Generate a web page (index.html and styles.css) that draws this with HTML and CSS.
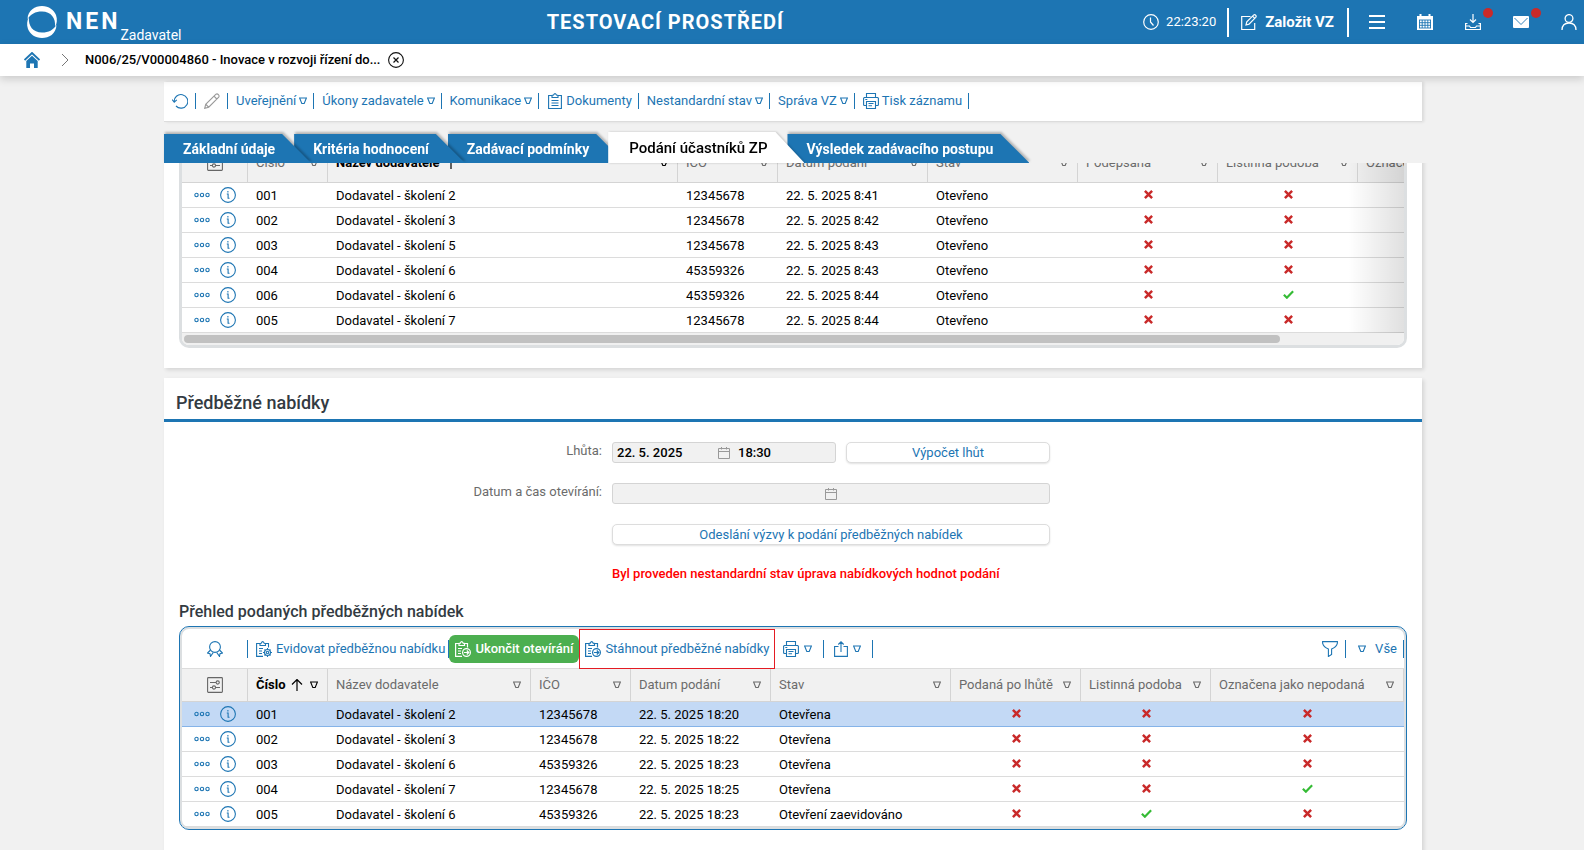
FILE: index.html
```html
<!DOCTYPE html>
<html lang="cs">
<head>
<meta charset="utf-8">
<title>NEN – Zadavatel</title>
<link rel="stylesheet" href="styles.css">
</head>
<body>
<svg class="sprite" aria-hidden="true">
  <symbol id="tri" viewBox="0 0 8 8"><path d="M.6 1h6.8L5.200 6.500H2.800z" fill="none" stroke="currentColor" stroke-width="1.1"/></symbol>
  <symbol id="dots" viewBox="0 0 16 6"><g fill="none" stroke="currentColor" stroke-width="1.1"><circle cx="2.5" cy="3" r="1.7"/><circle cx="8" cy="3" r="1.7"/><circle cx="13.5" cy="3" r="1.7"/></g></symbol>
  <symbol id="info" viewBox="0 0 16 16"><circle cx="8" cy="8" r="7.4" fill="none" stroke="currentColor" stroke-width="1.1"/><path d="M6.800 7h1.300v4.200h1.400M7.900 4v1.400" fill="none" stroke="currentColor" stroke-width="1.1"/></symbol>
  <symbol id="cross" viewBox="0 0 8 8"><path d="M.8.8l6.4 6.4M7.2.8L.8 7.2" stroke="currentColor" stroke-width="2.2"/></symbol>
  <symbol id="check" viewBox="0 0 10 8"><path d="M.8 4.2l2.7 2.7L9.2 1" fill="none" stroke="currentColor" stroke-width="2"/></symbol>
  <symbol id="settings" viewBox="0 0 16 16"><g fill="none" stroke="currentColor" stroke-width="1.1"><rect x=".6" y=".6" width="14.8" height="14.8" rx=".8"/><circle cx="10.7" cy="5.5" r="1.6"/><circle cx="7" cy="10.5" r="1.6"/><path d="M3 5.500h6M3 10.500h2.400M8.600 10.500H13"/></g></symbol>
  <symbol id="print" viewBox="0 0 16 16"><g fill="none" stroke="currentColor" stroke-width="1.1"><path d="M3.500 4.500v-4h9v4M3.500 12.500H1.200L.6 12V5.200l.7-.7h13.400l.7.700V12l-.6.500H12.500"/><path d="M3.500 8.500h9v7h-9zM5.500 10.500h5M5.500 12.800h3.500M2.300 6.500h2"/></g></symbol>
  <symbol id="clip" viewBox="0 0 14 16"><g fill="none" stroke="currentColor" stroke-width="1.100"><path d="M4 2.500H.6v13h12.800v-13H10"/><path d="M4 4.500v-2l1.500-.4Q7-.9 8.500 2.100l1.500.4v2zM3.500 7.500h7M3.500 10h7M3.500 12.500h7"/></g></symbol>
  <symbol id="clipgear" viewBox="0 0 16 16"><g fill="none" stroke="currentColor" stroke-width="1.100"><path d="M4 2.500H.6v12.900H7M9.500 2.500h3V6.500"/><path d="M4 4.500v-2l1.200-.3Q6.700-.9 8.200 2.200l1.300.3v2zM3 7.500h4M3 10h3M3 12.500h3"/><circle cx="11.500" cy="11.500" r="3"/><circle cx="11.500" cy="11.500" r="1.200"/><path d="M11.500 7v1.500M11.500 14.500V16M7 11.500h1.500M14.500 11.500H16M8.500 8.500l1 1M13.500 13.500l1 1M14.500 8.500l-1 1M9.500 13.500l-1 1"/></g></symbol>
  <symbol id="cliparrow" viewBox="0 0 16 16"><g fill="none" stroke="currentColor" stroke-width="1.200"><path d="M4 2.500H.6v12.900H7M9.500 2.500h3V6.500"/><path d="M4 4.500v-2l1.200-.3Q6.700-.9 8.200 2.200l1.300.3v2zM3 7.500h4M3 10h3M3 12.500h3"/><circle cx="11.500" cy="11.500" r="3.900"/><path d="M9 11.500h4.500M11.800 9.500l2 2-2 2"/></g></symbol>
  <symbol id="cal" viewBox="0 0 12 12"><path d="M.5 1.500h11v10H.5zM.5 4.500h11M3.500 0v2.500M8.500 0v2.500" fill="none" stroke="currentColor"/></symbol>
</svg>

<header class="topbar">
  <a class="brand" href="#">
    <svg class="brand-ring" viewBox="0 0 32 32"><path d="M1.500 13C2 4 9 0 16 0c7 0 12 4 14 9 1.500 4 1 9-1 12 1-9-4-15.500-13-15.500C9 5.500 5 8 1.500 13z" fill="#fff"/><path d="M30.500 19C30 28 23 32 16 32 9 32 4 28 2 23 .5 19 1 14 3 11c-1 9 4 15.500 13 15.500 7 0 11-2.500 14.500-7.500z" fill="#fff"/></svg>
    <span class="brand-name">NEN</span><span class="brand-role">Zadavatel</span>
  </a>
  <div class="env">TESTOVACÍ PROSTŘEDÍ</div>
  <div class="clock">
    <svg class="i16" viewBox="0 0 16 16"><circle cx="8" cy="8" r="7.300" fill="none" stroke="#fff" stroke-width="1.200"/><path d="M7.500 3.500V8l3 3.500" fill="none" stroke="#fff" stroke-width="1.200"/></svg>
    <time>22:23:20</time>
  </div>
  <button class="create" type="button">
    <svg class="i16" viewBox="0 0 16 16"><path d="M9.500 2.500H.7v13h13V9M5 11l.8-3.300L12.800.9q1-.6 2 .4.800 1-.1 2L8 10.200zM11.500 2.200l2 2" fill="none" stroke="#fff" stroke-width="1.200"/></svg>
    Založit VZ
  </button>
  <nav class="top-icons" aria-label="Uživatel">
    <button type="button" aria-label="Menu"><svg class="i16" viewBox="0 0 16 16"><path d="M0 2h16M0 8h16M0 14h16" stroke="#fff" stroke-width="2"/></svg></button>
    <button type="button" aria-label="Kalendář"><svg class="i16" viewBox="0 0 16 16"><path d="M0 2h2.500V0h2v2h7V0h2v2H16v14H0z" fill="#fff"/><path d="M2 6h12M2 8.700h12M2 11.300h12M2 14h12M2.500 6v8M5.200 6v8M8 6v8M10.800 6v8M13.500 6v8" stroke="#1d75b3" stroke-width=".9"/></svg></button>
    <button type="button" aria-label="Stažené soubory"><svg class="i16" viewBox="0 0 16 16"><path d="M8 0v8.500M5 5.500l3 3 3-3M2.500 9.500H.6v6h14.800v-6h-1.900M.6 12h3.900l1 1.500h5l1-1.500h3.900" fill="none" stroke="#fff" stroke-width="1.200"/></svg><i class="dot"></i></button>
    <button type="button" aria-label="Zprávy"><svg class="i16" viewBox="0 0 16 16"><rect y="2" width="16" height="12" rx="1" fill="#fff"/><path d="M1.500 4l6.500 6.500L14.500 4" fill="none" stroke="#1d75b3" stroke-width=".9"/></svg><i class="dot"></i></button>
    <button type="button" aria-label="Profil"><svg class="i16" viewBox="0 0 16 16"><g fill="none" stroke="#fff" stroke-width="1.300"><circle cx="8" cy="4.500" r="3.900"/><path d="M1 16q.2-7 7-7t7 7"/></g></svg></button>
  </nav>
</header>

<nav class="crumbs" aria-label="Drobečková navigace">
  <a class="home" href="#" aria-label="Domů"><svg class="i16" viewBox="0 0 16 16"><path d="M.5 8L8 1l7.500 7" fill="none" stroke="currentColor" stroke-width="1.900"/><path d="M2.300 9L8 3.800 13.700 9v7H10v-4.500H6V16H2.300z" fill="currentColor"/></svg></a>
  <svg class="chev" viewBox="0 0 8 14"><path d="M1 1l6 6-6 6" fill="none" stroke="#777"/></svg>
  <a class="record" href="#">N006/25/V00004860 - Inovace v rozvoji řízení do...</a>
  <button class="close" type="button" aria-label="Zavřít"><svg class="i16" viewBox="0 0 16 16"><circle cx="8" cy="8" r="7.400" fill="none" stroke="#111" stroke-width="1.100"/><path d="M5.500 5.500l5 5M10.500 5.500l-5 5" stroke="#111" stroke-width="1.200"/></svg></button>
</nav>

<main class="page">
  <div class="sticky">
    <div class="tools">
      <button class="tool icon" type="button" aria-label="Obnovit"><svg class="i16" viewBox="0 0 16 16"><path d="M2.200 9A6.800 6.800 0 1 1 4 13M0 6.500l2.200 2.700 2.600-2.400" fill="none" stroke="currentColor" stroke-width="1.100"/></svg></button>
      <button class="tool icon off" type="button" aria-label="Upravit"><svg class="i16" viewBox="0 0 16 16"><path d="M.7 15.300l1-4L12 1.200q1.200-.9 2.400.4t.3 2.500L4.700 14.200zM10 3.200L12.800 6M2 11.500l2.600 2.600" fill="none" stroke="currentColor" stroke-width="1.100"/></svg></button>
      <button class="tool" type="button">Uveřejnění<svg class="tri"><use href="#tri"/></svg></button>
      <button class="tool" type="button">Úkony zadavatele<svg class="tri"><use href="#tri"/></svg></button>
      <button class="tool" type="button">Komunikace<svg class="tri"><use href="#tri"/></svg></button>
      <button class="tool" type="button"><svg class="i16"><use href="#clip"/></svg>Dokumenty</button>
      <button class="tool" type="button">Nestandardní stav<svg class="tri"><use href="#tri"/></svg></button>
      <button class="tool" type="button">Správa VZ<svg class="tri"><use href="#tri"/></svg></button>
      <button class="tool" type="button"><svg class="i16"><use href="#print"/></svg>Tisk záznamu</button>
    </div>
    <div class="tabs" role="tablist">
      <button class="tab" role="tab" type="button"><span>Základní údaje</span></button>
      <button class="tab" role="tab" type="button"><span>Kritéria hodnocení</span></button>
      <button class="tab" role="tab" type="button"><span>Zadávací podmínky</span></button>
      <button class="tab active" role="tab" type="button" aria-selected="true"><span>Podání účastníků ZP</span></button>
      <button class="tab" role="tab" type="button"><span>Výsledek zadávacího postupu</span></button>
    </div>
  </div>

  <section class="card first">
    <div class="grid">
      <div class="scroller">
      <table class="t-bids">
        <colgroup><col class="w66"><col class="w80"><col class="w350"><col class="w100"><col class="w150"><col class="w150"><col class="w140"><col class="w140"><col></colgroup>
        <thead><tr>
          <th><svg class="set"><use href="#settings"/></svg></th>
          <th><div>Číslo<svg class="tri"><use href="#tri"/></svg></div></th>
          <th class="sorted"><div>Název dodavatele<svg class="arrow" viewBox="0 0 12 12"><path d="M6 12V.8M1 5.500l5-5 5 5" fill="none" stroke="#000" stroke-width="1.200"/></svg><svg class="tri"><use href="#tri"/></svg></div></th>
          <th><div>IČO<svg class="tri"><use href="#tri"/></svg></div></th>
          <th><div>Datum podání<svg class="tri"><use href="#tri"/></svg></div></th>
          <th><div>Stav<svg class="tri"><use href="#tri"/></svg></div></th>
          <th><div>Podepsána<svg class="tri"><use href="#tri"/></svg></div></th>
          <th><div>Listinná podoba<svg class="tri"><use href="#tri"/></svg></div></th>
          <th class="last"><div>Označena</div></th>
        </tr></thead>
        <tbody>
          <tr><td class="act"><svg class="dots"><use href="#dots"/></svg><svg class="i16"><use href="#info"/></svg></td><td>001</td><td>Dodavatel - školení 2</td><td>12345678</td><td>22. 5. 2025 8:41</td><td>Otevřeno</td><td class="m"><svg class="no"><use href="#cross"/></svg></td><td class="m"><svg class="no"><use href="#cross"/></svg></td><td></td></tr>
          <tr><td class="act"><svg class="dots"><use href="#dots"/></svg><svg class="i16"><use href="#info"/></svg></td><td>002</td><td>Dodavatel - školení 3</td><td>12345678</td><td>22. 5. 2025 8:42</td><td>Otevřeno</td><td class="m"><svg class="no"><use href="#cross"/></svg></td><td class="m"><svg class="no"><use href="#cross"/></svg></td><td></td></tr>
          <tr><td class="act"><svg class="dots"><use href="#dots"/></svg><svg class="i16"><use href="#info"/></svg></td><td>003</td><td>Dodavatel - školení 5</td><td>12345678</td><td>22. 5. 2025 8:43</td><td>Otevřeno</td><td class="m"><svg class="no"><use href="#cross"/></svg></td><td class="m"><svg class="no"><use href="#cross"/></svg></td><td></td></tr>
          <tr><td class="act"><svg class="dots"><use href="#dots"/></svg><svg class="i16"><use href="#info"/></svg></td><td>004</td><td>Dodavatel - školení 6</td><td>45359326</td><td>22. 5. 2025 8:43</td><td>Otevřeno</td><td class="m"><svg class="no"><use href="#cross"/></svg></td><td class="m"><svg class="no"><use href="#cross"/></svg></td><td></td></tr>
          <tr><td class="act"><svg class="dots"><use href="#dots"/></svg><svg class="i16"><use href="#info"/></svg></td><td>006</td><td>Dodavatel - školení 6</td><td>45359326</td><td>22. 5. 2025 8:44</td><td>Otevřeno</td><td class="m"><svg class="no"><use href="#cross"/></svg></td><td class="m"><svg class="yes"><use href="#check"/></svg></td><td></td></tr>
          <tr><td class="act"><svg class="dots"><use href="#dots"/></svg><svg class="i16"><use href="#info"/></svg></td><td>005</td><td>Dodavatel - školení 7</td><td>12345678</td><td>22. 5. 2025 8:44</td><td>Otevřeno</td><td class="m"><svg class="no"><use href="#cross"/></svg></td><td class="m"><svg class="no"><use href="#cross"/></svg></td><td></td></tr>
        </tbody>
      </table>
      </div>
      <div class="track"><div class="thumb"></div></div>
    </div>
  </section>

  <section class="card second">
    <h2>Předběžné nabídky</h2>
    <form class="form">
      <label for="deadline">Lhůta:</label>
      <div class="field date-time">
        <input id="deadline" class="date" value="22. 5. 2025" readonly>
        <svg class="cal"><use href="#cal"/></svg>
        <input class="time" aria-label="Čas lhůty" value="18:30" readonly>
      </div>
      <button class="btn" type="button">Výpočet lhůt</button>
      <label for="opening">Datum a čas otevírání:</label>
      <div class="field wide">
        <input id="opening" readonly>
        <svg class="cal"><use href="#cal"/></svg>
        <input aria-label="Čas otevírání" readonly>
      </div>
      <button class="btn wide" type="button">Odeslání výzvy k podání předběžných nabídek</button>
      <p class="warn">Byl proveden nestandardní stav úprava nabídkových hodnot podání</p>
    </form>
    <h3>Přehled podaných předběžných nabídek</h3>
    <div class="grid focus">
      <div class="gridbar">
        <button class="gtool award" type="button" aria-label="Hodnocení"><svg class="i16" viewBox="0 0 16 16"><g fill="none" stroke="currentColor" stroke-width="1.100"><circle cx="8" cy="6" r="5.400"/><path d="M3.500 9L.6 12l2.400.6.500 2.800L6.300 11.500M12.500 9l2.900 3-2.400.6-.5 2.800L9.700 11.500"/></g></svg></button>
        <button class="gtool add" type="button"><svg class="i16"><use href="#clipgear"/></svg>Evidovat předběžnou nabídku</button>
        <button class="gtool green" type="button"><svg class="i16"><use href="#cliparrow"/></svg>Ukončit otevírání</button>
        <button class="gtool marked" type="button"><svg class="i16"><use href="#cliparrow"/></svg>Stáhnout předběžné nabídky</button>
        <button class="gtool print" type="button" aria-label="Tisk"><svg class="i16"><use href="#print"/></svg><svg class="tri"><use href="#tri"/></svg></button>
        <button class="gtool export" type="button" aria-label="Export"><svg class="share" viewBox="0 0 14 16"><path d="M4.500 5.500H.6v9.900h12.800V5.500H9.500M7 11V.8M4.300 3.500L7 .8l2.700 2.700" fill="none" stroke="currentColor" stroke-width="1.100"/></svg><svg class="tri"><use href="#tri"/></svg></button>
        <button class="gtool filter" type="button" aria-label="Filtr"><svg class="i16" viewBox="0 0 16 16"><path d="M.6.600h14.800v1.500Q14.500 6 9.600 8v5.500l-3.200 2V8Q1.500 6 .6 2.100z" fill="none" stroke="currentColor" stroke-width="1.100"/></svg></button>
        <button class="gtool all" type="button"><svg class="tri"><use href="#tri"/></svg>Vše</button>
      </div>
      <table class="t-pre">
        <colgroup><col class="w66"><col class="w80"><col class="w203"><col class="w100"><col class="w140"><col class="w180"><col class="w130"><col class="w130"><col></colgroup>
        <thead><tr>
          <th><svg class="set"><use href="#settings"/></svg></th>
          <th class="sorted"><div>Číslo<svg class="arrow" viewBox="0 0 12 12"><path d="M6 12V.8M1 5.500l5-5 5 5" fill="none" stroke="#000" stroke-width="1.200"/></svg><svg class="tri"><use href="#tri"/></svg></div></th>
          <th><div>Název dodavatele<svg class="tri"><use href="#tri"/></svg></div></th>
          <th><div>IČO<svg class="tri"><use href="#tri"/></svg></div></th>
          <th><div>Datum podání<svg class="tri"><use href="#tri"/></svg></div></th>
          <th><div>Stav<svg class="tri"><use href="#tri"/></svg></div></th>
          <th><div>Podaná po lhůtě<svg class="tri"><use href="#tri"/></svg></div></th>
          <th><div>Listinná podoba<svg class="tri"><use href="#tri"/></svg></div></th>
          <th><div>Označena jako nepodaná<svg class="tri"><use href="#tri"/></svg></div></th>
        </tr></thead>
        <tbody>
          <tr class="selected"><td class="act"><svg class="dots"><use href="#dots"/></svg><svg class="i16"><use href="#info"/></svg></td><td>001</td><td>Dodavatel - školení 2</td><td>12345678</td><td>22. 5. 2025 18:20</td><td>Otevřena</td><td class="m"><svg class="no"><use href="#cross"/></svg></td><td class="m"><svg class="no"><use href="#cross"/></svg></td><td class="m"><svg class="no"><use href="#cross"/></svg></td></tr>
          <tr><td class="act"><svg class="dots"><use href="#dots"/></svg><svg class="i16"><use href="#info"/></svg></td><td>002</td><td>Dodavatel - školení 3</td><td>12345678</td><td>22. 5. 2025 18:22</td><td>Otevřena</td><td class="m"><svg class="no"><use href="#cross"/></svg></td><td class="m"><svg class="no"><use href="#cross"/></svg></td><td class="m"><svg class="no"><use href="#cross"/></svg></td></tr>
          <tr><td class="act"><svg class="dots"><use href="#dots"/></svg><svg class="i16"><use href="#info"/></svg></td><td>003</td><td>Dodavatel - školení 6</td><td>45359326</td><td>22. 5. 2025 18:23</td><td>Otevřena</td><td class="m"><svg class="no"><use href="#cross"/></svg></td><td class="m"><svg class="no"><use href="#cross"/></svg></td><td class="m"><svg class="no"><use href="#cross"/></svg></td></tr>
          <tr><td class="act"><svg class="dots"><use href="#dots"/></svg><svg class="i16"><use href="#info"/></svg></td><td>004</td><td>Dodavatel - školení 7</td><td>12345678</td><td>22. 5. 2025 18:25</td><td>Otevřena</td><td class="m"><svg class="no"><use href="#cross"/></svg></td><td class="m"><svg class="no"><use href="#cross"/></svg></td><td class="m"><svg class="yes"><use href="#check"/></svg></td></tr>
          <tr><td class="act"><svg class="dots"><use href="#dots"/></svg><svg class="i16"><use href="#info"/></svg></td><td>005</td><td>Dodavatel - školení 6</td><td>45359326</td><td>22. 5. 2025 18:23</td><td>Otevření zaevidováno</td><td class="m"><svg class="no"><use href="#cross"/></svg></td><td class="m"><svg class="yes"><use href="#check"/></svg></td><td class="m"><svg class="no"><use href="#cross"/></svg></td></tr>
        </tbody>
      </table>
    </div>
  </section>
</main>
</body>
</html>
```

FILE: styles.css
```css
:root {
  --blue: #1d75b3;
  --line: #dcdcdc;
  --grey: #f1f1f1;
}
* { box-sizing: border-box; }
html, body { height: 100%; }
body {
  margin: 0;
  display: flex;
  flex-direction: column;
  overflow: hidden;
  background: var(--grey);
  color: #000;
  font: 13px/16px Roboto, "Liberation Sans", sans-serif;
}
button, input { font: inherit; color: inherit; }
button { border: 0; padding: 0; background: none; cursor: pointer; }
a { color: inherit; text-decoration: none; }
svg { display: block; flex: none; }
.sprite { position: absolute; width: 0; height: 0; }
.i16 { width: 16px; height: 16px; }
.tri { width: 8px; height: 8px; }

/* top bar */
.topbar {
  flex: none;
  display: flex;
  align-items: center;
  height: 44px;
  background: var(--blue);
  color: #fff;
}
.brand { display: flex; align-items: center; padding: 0 6px 0 26px; }
.brand-ring { width: 32px; height: 32px; }
.brand-name { margin-left: 8px; font-size: 23px; line-height: 24px; font-weight: 700; letter-spacing: 3px; }
.brand-role { padding-top: 26px; font-size: 14px; line-height: 16px; }
.env {
  margin: 0 auto;
  font-size: 20px;
  line-height: 24px;
  font-weight: 700;
  letter-spacing: 1px;
}
.clock { display: flex; align-items: center; gap: 7px; padding-right: 11px; }
.create {
  display: flex;
  align-items: center;
  gap: 8px;
  height: 29px;
  padding: 0 13px 0 12px;
  border: solid #fff;
  border-width: 0 2px;
  font-size: 15px;
  font-weight: 700;
}
.top-icons { display: flex; align-items: center; gap: 32px; padding: 0 7px 0 20px; }
.top-icons button { position: relative; }
.dot {
  position: absolute;
  top: -6px;
  right: -12px;
  width: 10px;
  height: 10px;
  border-radius: 50%;
  background: #c92a2a;
}

/* breadcrumb */
.crumbs {
  flex: none;
  position: relative;
  z-index: 3;
  display: flex;
  align-items: center;
  height: 32px;
  padding-left: 24px;
  background: #fff;
  box-shadow: 0 3px 8px rgba(0, 0, 0, .16);
}
.home { color: var(--blue); }
.chev { width: 8px; height: 14px; margin: 0 16px 0 21px; }
.record { font-weight: 500; }
.close { margin-left: 8px; }

/* page */
.page { flex: 1; min-height: 0; overflow: hidden; padding: 6px 162px 0 164px; }
.sticky { position: relative; z-index: 2; }
.sticky::before {
  content: "";
  position: absolute;
  z-index: -1;
  inset: 0 -10px 0 0;
  background: var(--grey);
}
.tools {
  display: flex;
  align-items: center;
  height: 40px;
  padding-bottom: 2px;
  background: #fff;
  border-bottom: 1px solid var(--line);
  box-shadow: 2px 0 3px rgba(0, 0, 0, .1);
}
.tool {
  display: flex;
  align-items: center;
  gap: 3px;
  height: 16px;
  padding: 0 6px 0 8px;
  border-right: 1px solid var(--blue);
  color: var(--blue);
}
.tool.icon { padding-right: 7px; }
.tool.off { color: #999; }

.tabs { display: flex; align-items: flex-end; height: 41px; }
.tab {
  position: relative;
  height: 29px;
  margin-right: -17px;
  color: #fff;
  font-size: 14px;
  font-weight: 700;
  filter: drop-shadow(1px -2px 1px rgba(0, 0, 0, .25));
}
.tab span {
  display: flex;
  align-items: center;
  height: 100%;
  padding: 1px 36px 0 19px;
  background: var(--blue);
  clip-path: polygon(0 0, calc(100% - 29px) 0, 100% 100%, 0 100%);
}
.tab:nth-child(1) { z-index: 3; }
.tab:nth-child(2) { z-index: 2; }
.tab:nth-child(3) { z-index: 1; }
.tab.active { z-index: 4; height: 31px; color: #000; font-size: 15px; font-weight: 500; filter: drop-shadow(1px 0 1px rgba(0, 0, 0, .2)); }
.tab.active span { padding: 0 37px 0 21px; background: #fff; }

.card { background: #fff; box-shadow: 2px 2px 4px rgba(0, 0, 0, .12); }
.first { margin-top: -13px; padding: 0 15px 20px; }
.second { margin-top: 10px; height: 520px; }

/* grids */
.grid { border: 3px solid #dcdfe1; border-radius: 0 0 10px 10px; border-top: 0; overflow: hidden; }
.scroller { position: relative; }
.scroller::after {
  content: "";
  position: absolute;
  inset: 0 0 0 auto;
  width: 56px;
  background: linear-gradient(90deg, transparent, rgba(0, 0, 0, .12));
}
table { width: 100%; border-collapse: separate; border-spacing: 0; table-layout: fixed; }
.w66 { width: 66px; }
.w80 { width: 80px; }
.w100 { width: 100px; }
.w130 { width: 130px; }
.w140 { width: 140px; }
.w150 { width: 150px; }
.w180 { width: 180px; }
.w203 { width: 203px; }
.w350 { width: 350px; }
th {
  height: 33px;
  padding: 0 9px 0 8px;
  background: #f1f1f1;
  border: solid #d4d4d4;
  border-width: 0 1px 1px 0;
  color: #6b6b6b;
  font-weight: 400;
  text-align: left;
  white-space: nowrap;
  overflow: hidden;
}
th:first-child { padding-right: 7px; }
.t-bids th { padding-bottom: 6px; }
th.last { padding-right: 0; border-right: 0; }
th div { display: flex; align-items: center; }
th .tri { margin-left: auto; }
th.sorted { color: #000; font-weight: 700; }
.arrow { width: 12px; height: 12px; margin-left: 5px; }
.set { width: 16px; height: 16px; margin: 0 auto; color: #666; }
td { height: 25px; padding: 1px 8px 0; border-bottom: 1px solid var(--line); white-space: nowrap; }
.act { padding: 0 0 0 12px; color: var(--blue); }
.act svg { display: inline-block; vertical-align: middle; }
.dots { width: 16px; height: 6px; margin-right: 10px; }
.m { padding: 0 0 2px; }
.m svg { margin: 0 auto; }
.no { width: 9px; height: 9px; color: #c92a2a; }
.yes { width: 11px; height: 9px; color: #35bb35; }
.selected td { background: #c3d9f5; border-color: #85b3e8; }
.track { height: 12px; padding: 2px; background: #f0f0f0; }
.thumb { width: 90%; height: 8px; border-radius: 4px; background: #c1c1c1; }

/* second card */
h2 {
  margin: 0;
  padding: 15px 12px 6px;
  border-bottom: 3px solid var(--blue);
  color: #333b42;
  font-size: 18px;
  line-height: 20px;
  font-weight: 500;
}
.form {
  display: grid;
  grid-template-columns: 438px 224px 204px;
  column-gap: 10px;
  row-gap: 20px;
  padding-top: 20px;
}
.form label { height: 21px; padding-top: 1px; color: #6b6b6b; text-align: right; }
.field {
  display: flex;
  align-items: center;
  height: 21px;
  border: 1px solid #d4d4d4;
  border-radius: 3px;
  background: #f1f1f1;
}
.field input {
  flex: 1;
  min-width: 0;
  height: 19px;
  padding: 0 4px;
  border: 0;
  outline: 0;
  background: none;
  font-weight: 500;
}
.field .date { flex: 0 0 105px; }
.field .time { padding-left: 8px; }
.wide { grid-column: 2 / 4; }
.cal { width: 12px; height: 12px; color: #999; }
.btn {
  height: 21px;
  border: 1px solid #ddd;
  border-radius: 5px;
  background: #fff;
  box-shadow: 0 1px 2px rgba(0, 0, 0, .12);
  color: var(--blue);
}
.warn { grid-column: 2 / 4; margin: 0; padding-top: 1px; color: #f00; font-weight: 500; }
h3 { margin: 20px 15px 4px; color: #333b42; font-size: 16px; line-height: 20px; font-weight: 500; }
.focus {
  margin: 0 15px;
  border: 1px solid var(--blue);
  border-radius: 10px;
  background: #fff;
  padding: 2px;
  box-shadow: inset 0 0 0 2px #dcdfe1;
}
.gridbar { display: flex; align-items: center; height: 40px; border-bottom: 1px solid var(--line); }
.gtool {
  display: flex;
  align-items: center;
  gap: 4px;
  height: 18px;
  padding: 0 6px 0 8px;
  border-right: 1px solid var(--blue);
  color: var(--blue);
  white-space: nowrap;
}
.award { width: 66px; padding: 0 0 0 25px; }
.add { padding-right: 3px; }
.green { height: 28px; padding: 0 6px; border: 0; border-radius: 6px; background: #4caf50; color: #fff; font-weight: 500; }
.marked { height: 40px; padding: 0 5px; border: 1px solid #e41b23; }
.print { gap: 5px; padding: 0 11px 0 8px; }
.export { gap: 5px; padding: 0 11px 0 10px; }
.share { width: 14px; height: 16px; }
.filter { margin-left: auto; padding: 0 7px 0 0; }
.all { gap: 9px; padding: 0 6px 0 12px; }
```
